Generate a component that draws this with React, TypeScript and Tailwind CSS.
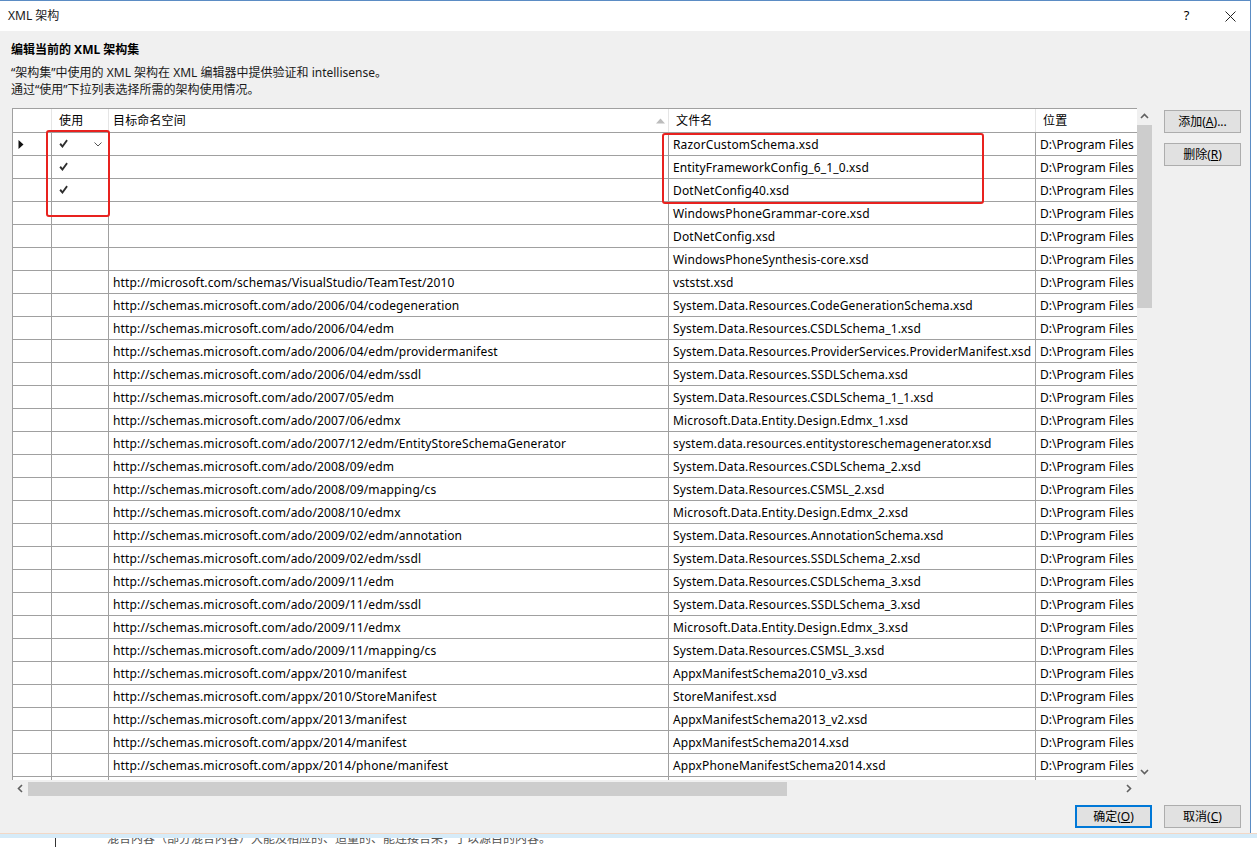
import React from "react";

type Row = { ns: string; file: string; used?: boolean };

const rows: Row[] = [
  { ns: "", file: "RazorCustomSchema.xsd", used: true },
  { ns: "", file: "EntityFrameworkConfig_6_1_0.xsd", used: true },
  { ns: "", file: "DotNetConfig40.xsd", used: true },
  { ns: "", file: "WindowsPhoneGrammar-core.xsd" },
  { ns: "", file: "DotNetConfig.xsd" },
  { ns: "", file: "WindowsPhoneSynthesis-core.xsd" },
  { ns: "http://microsoft.com/schemas/VisualStudio/TeamTest/2010", file: "vststst.xsd" },
  { ns: "http://schemas.microsoft.com/ado/2006/04/codegeneration", file: "System.Data.Resources.CodeGenerationSchema.xsd" },
  { ns: "http://schemas.microsoft.com/ado/2006/04/edm", file: "System.Data.Resources.CSDLSchema_1.xsd" },
  { ns: "http://schemas.microsoft.com/ado/2006/04/edm/providermanifest", file: "System.Data.Resources.ProviderServices.ProviderManifest.xsd" },
  { ns: "http://schemas.microsoft.com/ado/2006/04/edm/ssdl", file: "System.Data.Resources.SSDLSchema.xsd" },
  { ns: "http://schemas.microsoft.com/ado/2007/05/edm", file: "System.Data.Resources.CSDLSchema_1_1.xsd" },
  { ns: "http://schemas.microsoft.com/ado/2007/06/edmx", file: "Microsoft.Data.Entity.Design.Edmx_1.xsd" },
  { ns: "http://schemas.microsoft.com/ado/2007/12/edm/EntityStoreSchemaGenerator", file: "system.data.resources.entitystoreschemagenerator.xsd" },
  { ns: "http://schemas.microsoft.com/ado/2008/09/edm", file: "System.Data.Resources.CSDLSchema_2.xsd" },
  { ns: "http://schemas.microsoft.com/ado/2008/09/mapping/cs", file: "System.Data.Resources.CSMSL_2.xsd" },
  { ns: "http://schemas.microsoft.com/ado/2008/10/edmx", file: "Microsoft.Data.Entity.Design.Edmx_2.xsd" },
  { ns: "http://schemas.microsoft.com/ado/2009/02/edm/annotation", file: "System.Data.Resources.AnnotationSchema.xsd" },
  { ns: "http://schemas.microsoft.com/ado/2009/02/edm/ssdl", file: "System.Data.Resources.SSDLSchema_2.xsd" },
  { ns: "http://schemas.microsoft.com/ado/2009/11/edm", file: "System.Data.Resources.CSDLSchema_3.xsd" },
  { ns: "http://schemas.microsoft.com/ado/2009/11/edm/ssdl", file: "System.Data.Resources.SSDLSchema_3.xsd" },
  { ns: "http://schemas.microsoft.com/ado/2009/11/edmx", file: "Microsoft.Data.Entity.Design.Edmx_3.xsd" },
  { ns: "http://schemas.microsoft.com/ado/2009/11/mapping/cs", file: "System.Data.Resources.CSMSL_3.xsd" },
  { ns: "http://schemas.microsoft.com/appx/2010/manifest", file: "AppxManifestSchema2010_v3.xsd" },
  { ns: "http://schemas.microsoft.com/appx/2010/StoreManifest", file: "StoreManifest.xsd" },
  { ns: "http://schemas.microsoft.com/appx/2013/manifest", file: "AppxManifestSchema2013_v2.xsd" },
  { ns: "http://schemas.microsoft.com/appx/2014/manifest", file: "AppxManifestSchema2014.xsd" },
  { ns: "http://schemas.microsoft.com/appx/2014/phone/manifest", file: "AppxPhoneManifestSchema2014.xsd" },
  { ns: "", file: "" },
];

function Check() {
  return (
    <svg width="9" height="10" viewBox="0 0 9 10">
      <path d="M0.4 5.4 L1.9 4.1 L3.4 5.9 L7.4 0.6 L8.8 1.7 L3.5 9 Z" fill="#2e2e2e" />
    </svg>
  );
}

function Chevron({ dir }: { dir: "up" | "down" | "left" | "right" }) {
  const d = {
    up: "M1 6 L4.5 2.5 L8 6",
    down: "M1 3 L4.5 6.5 L8 3",
    left: "M6 1 L2.5 4.5 L6 8",
    right: "M3 1 L6.5 4.5 L3 8",
  }[dir];
  return (
    <svg width="9" height="9" viewBox="0 0 9 9">
      <path d={d} fill="none" stroke="#606060" strokeWidth="1.6" />
    </svg>
  );
}

function Button({ label, keyChar, suffix, primary }: { label: string; keyChar: string; suffix?: string; primary?: boolean }) {
  return (
    <div
      className={`flex h-[23px] w-[77px] items-center justify-center bg-[#e1e1e1] ${
        primary ? "border-2 border-[#0078d7]" : "border border-[#adadad]"
      }`}
    >
      <span>
        {label}(<span className="underline">{keyChar}</span>){suffix}
      </span>
    </div>
  );
}

export default function App() {
  return (
    <div className="relative h-[847px] w-[1257px] overflow-hidden bg-white font-['Noto_Sans','Noto_Sans_CJK_SC',sans-serif] text-[12px] text-black">
      <div className="flex h-[833px] w-[1251px] flex-col border-t border-r border-[#5b8cc4]">
        {/* title bar */}
        <div className="flex h-[30px] shrink-0 items-center bg-white">
          <span className="pl-[8px] text-[12px] text-[#1a1a1a]">XML 架构</span>
          <div className="flex-1" />
          <div className="flex w-[52px] justify-center pl-[3px] text-[13px]">?</div>
          <div className="flex w-[39px] justify-center">
            <svg width="11" height="11" viewBox="0 0 11 11">
              <path d="M0.5 0.5 L10.5 10.5 M10.5 0.5 L0.5 10.5" stroke="#222" strokeWidth="1" />
            </svg>
          </div>
        </div>

        {/* body */}
        <div className="flex flex-1 flex-col bg-[#f0f0f0]">
          <div className="pl-[11px] pt-[11px]">
            <div className="h-[16px] font-bold leading-[16px]">编辑当前的 XML 架构集</div>
            <div className="mt-[6px] leading-[17px] text-[#1a1a1a]">
              <div>“架构集”中使用的 XML 架构在 XML 编辑器中提供验证和 intellisense。</div>
              <div>通过“使用”下拉列表选择所需的架构使用情况。</div>
            </div>
          </div>

          <div className="mt-[10px] flex pl-[12px]">
            <div className="flex h-[689px] w-[1140px] flex-col">
              <div className="flex h-[672px]">
                <div className="h-full w-[1125px] overflow-hidden border-l border-t border-[#a0a0a0] bg-white tracking-[0.14px]">
                  {/* header */}
                  <div className="flex h-[24px] border-b border-[#a0a0a0]">
                    <div className="w-[39px] shrink-0 border-r border-[#e5e5e5]" />
                    <div className="flex w-[57px] shrink-0 items-center border-r border-[#e5e5e5] pl-[7px]">使用</div>
                    <div className="flex w-[560px] shrink-0 items-center justify-between border-r border-[#e5e5e5] pl-[4px] pr-[3px]">
                      <span>目标命名空间</span>
                      <svg width="9" height="6" viewBox="0 0 9 6">
                        <path d="M0 5.5 L4.5 0.5 L9 5.5 Z" fill="#bcbcbc" />
                      </svg>
                    </div>
                    <div className="flex w-[367px] shrink-0 items-center border-r border-[#e5e5e5] pl-[7px]">文件名</div>
                    <div className="flex flex-1 items-center pl-[7px]">位置</div>
                  </div>
                  {/* rows */}
                  {rows.map((r, i) => (
                    <div key={i} className="flex h-[23px] border-b border-[#a0a0a0] pt-[1px]">
                      <div className="-mt-[1px] flex w-[39px] shrink-0 items-center border-r border-[#a0a0a0] pl-[5px]">
                        {i === 0 ? (
                          <svg width="6" height="9" viewBox="0 0 6 9">
                            <path d="M0.5 0 L5.5 4.5 L0.5 9 Z" fill="#111" />
                          </svg>
                        ) : null}
                      </div>
                      <div className="-mt-[1px] flex w-[57px] shrink-0 items-center justify-between border-r border-[#a0a0a0] pl-[7px] pr-[6px]">
                        {r.used ? <Check /> : <span />}
                        {i === 0 ? (
                          <svg width="8" height="5" viewBox="0 0 8 5">
                            <path d="M0.5 0.5 L4 4 L7.5 0.5" fill="none" stroke="#555" strokeWidth="1" />
                          </svg>
                        ) : null}
                      </div>
                      <div className="-mt-[1px] flex w-[560px] shrink-0 items-center whitespace-nowrap border-r border-[#a0a0a0] pl-[4px] pt-[1px]">
                        {r.ns}
                      </div>
                      <div className="-mt-[1px] flex w-[367px] shrink-0 items-center overflow-hidden whitespace-nowrap border-r border-[#a0a0a0] pl-[4px] pt-[1px]">
                        {r.file}
                      </div>
                      <div className="-mt-[1px] flex min-w-0 flex-1 items-center overflow-hidden whitespace-nowrap pl-[4px] pt-[1px] tracking-normal">
                        {r.file ? "D:\\Program Files" : ""}
                      </div>
                    </div>
                  ))}
                </div>
                {/* vertical scrollbar */}
                <div className="flex h-full w-[15px] flex-col bg-[#f0f0f0]">
                  <div className="flex h-[17px] items-center justify-center">
                    <Chevron dir="up" />
                  </div>
                  <div className="h-[183px] bg-[#cdcdcd]" />
                  <div className="flex-1" />
                  <div className="flex h-[17px] items-center justify-center">
                    <Chevron dir="down" />
                  </div>
                </div>
              </div>
              {/* horizontal scrollbar */}
              <div className="flex h-[17px]">
                <div className="flex w-[1125px] items-center bg-[#f0f0f0]">
                  <div className="flex w-[16px] justify-center">
                    <Chevron dir="left" />
                  </div>
                  <div className="h-[14px] w-[759px] bg-[#cdcdcd]" />
                  <div className="flex-1" />
                  <div className="flex w-[17px] justify-center">
                    <Chevron dir="right" />
                  </div>
                </div>
                <div className="w-[15px] bg-[#f0f0f0]" />
              </div>
            </div>

            <div className="ml-[12px] flex flex-col gap-[10px] pt-[2px]">
              <Button label="添加" keyChar="A" suffix="..." />
              <Button label="删除" keyChar="R" />
            </div>
          </div>

          <div className="mt-[8px] flex justify-end gap-[12px] pr-[9px]">
            <Button label="确定" keyChar="O" primary />
            <Button label="取消" keyChar="C" />
          </div>
        </div>
      </div>

      {/* window behind the dialog */}
      <div className="flex h-[14px] flex-col border-t border-[#f2d8c6]">
        <div className="h-[4px] bg-[#d6ebf8]" />
        <div className="flex flex-1 overflow-hidden bg-white">
          <div className="ml-[55px] w-[1px] bg-[#333]" />
          <div className="-mt-[8px] ml-[51px] whitespace-nowrap text-[#555]">
            混合内容（部分混合内容）大能及相应的、适量的、能连接合来，于以源目的内容。
          </div>
        </div>
      </div>

      {/* red annotation boxes */}
      <div className="absolute left-[46px] top-[130px] h-[87px] w-[64px] rounded-[3px] border-2 border-[#e8221f]" />
      <div className="absolute left-[662px] top-[133px] h-[71px] w-[322px] rounded-[3px] border-2 border-[#e8221f]" />
    </div>
  );
}
